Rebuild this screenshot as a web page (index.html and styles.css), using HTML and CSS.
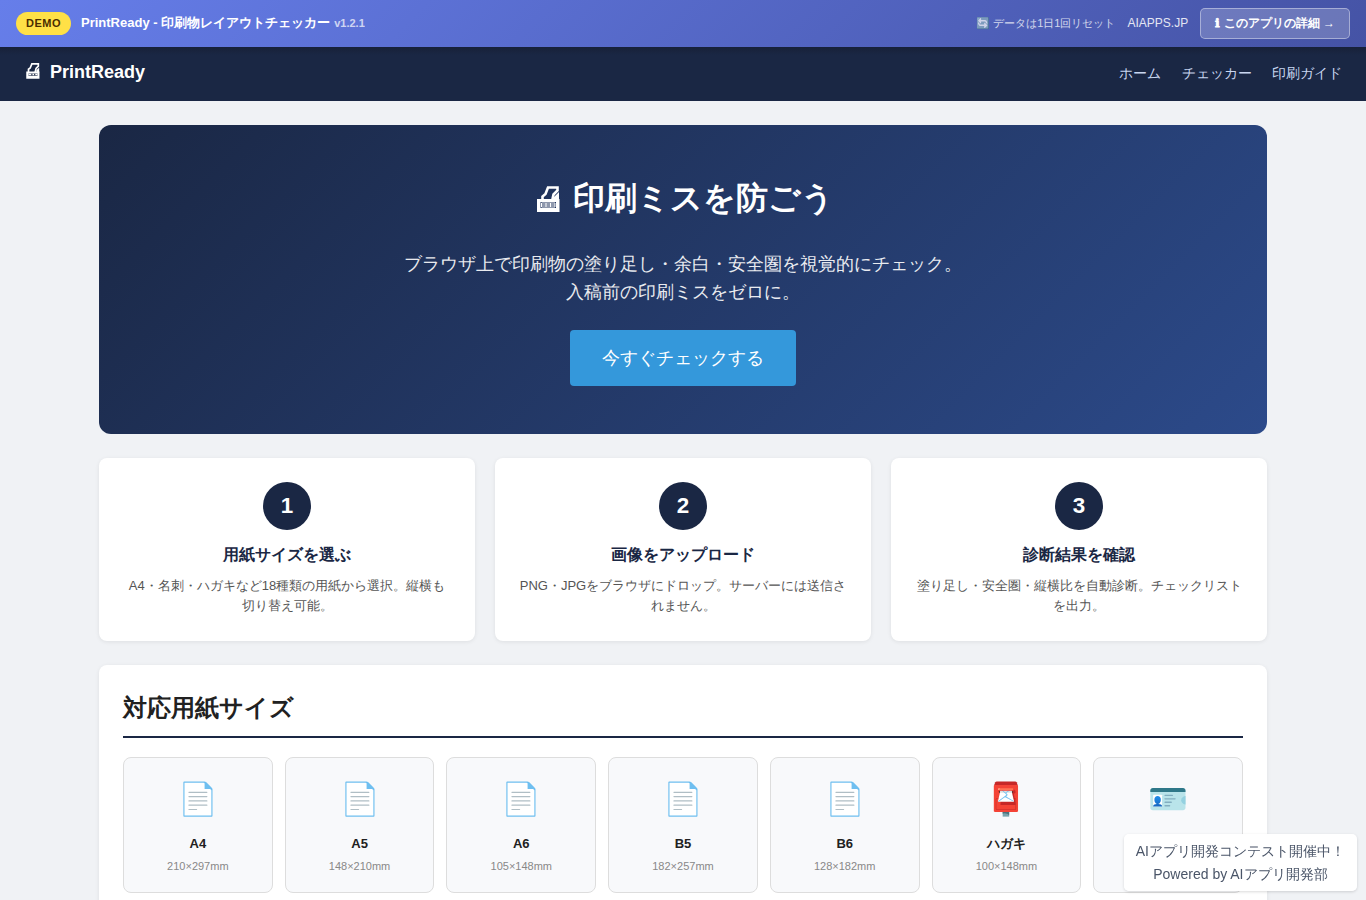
FILE: index.html
```html
<!DOCTYPE html>
<html lang="ja">

<head>
    <meta charset="UTF-8">
    <title>PrintReady</title>
    <link rel="stylesheet" href="styles.css">
</head>

<body>
    <div class="demo-bar">
        <div class="demo-left">
            <span class="badge">DEMO</span>
            <span class="demo-title">PrintReady - 印刷物レイアウトチェッカー <small>v1.2.1</small></span>
        </div>
        <div class="demo-right">
            <span class="reset">🔄 データは1日1回リセット</span>
            <a class="site" href="#">AIAPPS.JP</a>
            <a class="detail" href="#"><span class="info">ℹ</span> このアプリの詳細 →</a>
        </div>
    </div>
    <nav class="navbar">
        <a class="brand" href="#">
            <svg class="printer" viewBox="0 0 32 32">
                <path d="M8 17v-6l3-2 3-7.500h11.500v4l-4 4-2 8" fill="none" stroke="currentColor" stroke-width="3" />
                <path d="M27 8l-5 5v4h5z" fill="currentColor" />
                <path fill-rule="evenodd" d="M4 15h23.500v13H4zM8 18.500v4h16v-4z" fill="currentColor" />
                <path d="M8 20.500h5M15 20.500h3M20 20.500h4" stroke="currentColor" stroke-width="2.500" />
            </svg>
            PrintReady
        </a>
        <div class="links">
            <a href="#">ホーム</a>
            <a href="#">チェッカー</a>
            <a href="#">印刷ガイド</a>
        </div>
    </nav>
    <main class="container">
        <section class="hero">
            <h1>
                <svg class="printer" viewBox="0 0 32 32">
                    <path d="M10.500 16v-4.500l3-2.500 2.500-6.500h9.500v3l-4 4-1.500 7" fill="none" stroke="currentColor" stroke-width="2.600" />
                    <path d="M27 7l-6 6v3h6z" fill="currentColor" />
                    <path fill-rule="evenodd" d="M5 14h22.500v13H5zM8.500 17v6h15.500v-6z" fill="currentColor" />
                    <path d="M9.500 18h13.500v4H9.500zM9.500 20h13.500M14 18v4M18.500 18v4" fill="none" stroke="currentColor" stroke-width="1" />
                </svg>
                印刷ミスを防ごう
            </h1>
            <p>ブラウザ上で印刷物の塗り足し・余白・安全圏を視覚的にチェック。<br>入稿前の印刷ミスをゼロに。</p>
            <a class="btn" href="#">今すぐチェックする</a>
        </section>
        <section class="steps">
            <div class="step">
                <div class="num">1</div>
                <h3>用紙サイズを選ぶ</h3>
                <p>A4・名刺・ハガキなど18種類の用紙から選択。縦横も切り替え可能。</p>
            </div>
            <div class="step">
                <div class="num">2</div>
                <h3>画像をアップロード</h3>
                <p>PNG・JPGをブラウザにドロップ。サーバーには送信されません。</p>
            </div>
            <div class="step">
                <div class="num">3</div>
                <h3>診断結果を確認</h3>
                <p>塗り足し・安全圏・縦横比を自動診断。チェックリストを出力。</p>
            </div>
        </section>
        <section class="card">
            <h2>対応用紙サイズ</h2>
            <div class="papers">
                <div class="paper"><div class="icon">📄</div><b>A4</b><span>210×297mm</span></div>
                <div class="paper"><div class="icon">📄</div><b>A5</b><span>148×210mm</span></div>
                <div class="paper"><div class="icon">📄</div><b>A6</b><span>105×148mm</span></div>
                <div class="paper"><div class="icon">📄</div><b>B5</b><span>182×257mm</span></div>
                <div class="paper"><div class="icon">📄</div><b>B6</b><span>128×182mm</span></div>
                <div class="paper"><div class="icon">📮</div><b>ハガキ</b><span>100×148mm</span></div>
                <div class="paper"><div class="icon">🪪</div></div>
            </div>
        </section>
    </main>
    <div class="powered">
        <div>AIアプリ開発コンテスト開催中！</div>
        <div>Powered by AIアプリ開発部</div>
    </div>
</body>

</html>
```
FILE: styles.css
```css
* {
    box-sizing: border-box;
    margin: 0;
    padding: 0;
}

body {
    font-family: "Liberation Sans", sans-serif;
    background: #f0f2f5;
    color: #212121;
    line-height: 1.6;
    height: 900px;
    overflow: hidden;
}

a {
    color: inherit;
    text-decoration: none;
}

.demo-bar {
    height: 47px;
    padding: 0 16px;
    display: flex;
    align-items: center;
    justify-content: space-between;
    color: white;
    background: linear-gradient(135deg, #667eea 0%, #4553a5 100%);
}

.demo-left {
    display: flex;
    align-items: center;
    gap: 10px;
}

.badge {
    background: #ffe046;
    color: #4a2c00;
    font-size: 11px;
    font-weight: bold;
    letter-spacing: 0.5px;
    padding: 3px 10px;
    border-radius: 20px;
}

.demo-title {
    font-size: 13px;
    font-weight: bold;
}

.demo-title small {
    font-size: 11px;
    opacity: 0.7;
    margin-left: 0.4px;
}

.demo-right {
    display: flex;
    align-items: center;
    gap: 12px;
    font-size: 12px;
}

.reset {
    font-size: 11px;
    opacity: 0.75;
}

.site {
    opacity: 0.85;
}

.detail {
    font-weight: bold;
    line-height: 19px;
    padding: 5px 14px;
    border: 1px solid rgba(255, 255, 255, 0.4);
    border-radius: 5px;
    background: rgba(255, 255, 255, 0.2);
}

.info {
    display: inline-block;
    width: 5.2px;
    line-height: 1;
    font-family: "DejaVu Sans", sans-serif;
    -webkit-text-stroke: 0.8px white;
}

.navbar {
    height: 54px;
    padding: 0 24px;
    display: flex;
    align-items: center;
    justify-content: space-between;
    background: linear-gradient(#172139, #1a2744 8px);
    color: white;
}

.brand {
    display: flex;
    align-items: center;
    gap: 8px;
    font-size: 18px;
    font-weight: bold;
    padding-bottom: 3px;
}

.printer {
    width: 1em;
    height: 1em;
}

.links {
    display: flex;
    gap: 20.4px;
    font-size: 14px;
    color: #c8d6f0;
    padding-bottom: 2px;
}

.container {
    width: 1168px;
    margin: 24px auto 0;
}

.hero {
    height: 309px;
    padding: 48px 24px;
    text-align: center;
    color: white;
    border-radius: 12px;
    background: linear-gradient(135deg, #1a2744, #2c4a8a);
    margin-bottom: 24px;
}

.hero h1 {
    font-size: 32px;
    line-height: 51px;
    margin-bottom: 26px;
}

.hero .printer {
    vertical-align: -8px;
}

.hero p {
    font-size: 18px;
    line-height: 28px;
    opacity: 0.9;
    margin-bottom: 24px;
}

.btn {
    display: inline-block;
    font-size: 18px;
    line-height: 28px;
    padding: 14px 32px;
    border-radius: 4px;
    background: #3498db;
}

.steps {
    display: grid;
    grid-template-columns: repeat(3, 1fr);
    gap: 20px;
    margin-bottom: 24px;
}

.step {
    height: 183px;
    padding: 24px;
    text-align: center;
    background: white;
    border-radius: 8px;
    box-shadow: 0 1px 4px rgba(0, 0, 0, 0.08);
}

.num {
    width: 48px;
    height: 48px;
    line-height: 48px;
    margin: 0 auto 12px;
    border-radius: 50%;
    background: #1a2744;
    color: white;
    font-size: 22.4px;
    font-weight: bold;
}

.step h3 {
    font-size: 16px;
    line-height: 26px;
    color: #1a2744;
    margin-bottom: 8px;
}

.step p {
    font-size: 13px;
    line-height: 20px;
    color: #555;
}

.card {
    padding: 24px;
    background: white;
    border-radius: 8px;
    box-shadow: 0 1px 4px rgba(0, 0, 0, 0.08);
}

.card h2 {
    font-size: 24px;
    line-height: 38px;
    padding-bottom: 9px;
    border-bottom: 2px solid #1a2744;
    margin-bottom: 19px;
}

.papers {
    display: grid;
    grid-template-columns: repeat(7, 1fr);
    gap: 12px;
}

.paper {
    height: 136px;
    padding: 16px 12px;
    text-align: center;
    background: #f8f9fb;
    border: 1px solid #ddd;
    border-radius: 8px;
}

.icon {
    font-size: 32px;
    line-height: 51px;
    margin-bottom: 8px;
}

.paper b,
.paper span {
    display: block;
}

.paper b {
    font-size: 13px;
    line-height: 21px;
    margin-bottom: 3px;
}

.paper span {
    font-size: 11px;
    line-height: 18px;
    color: #888;
}

.powered {
    position: fixed;
    right: 9px;
    bottom: 9px;
    padding: 6px 12px 5px;
    text-align: center;
    font-size: 14px;
    line-height: 23px;
    color: #4a5568;
    background: rgba(255, 255, 255, 0.95);
    border-radius: 5px;
    box-shadow: 0 1px 3px rgba(0, 0, 0, 0.15);
    backdrop-filter: blur(4px);
}
```
